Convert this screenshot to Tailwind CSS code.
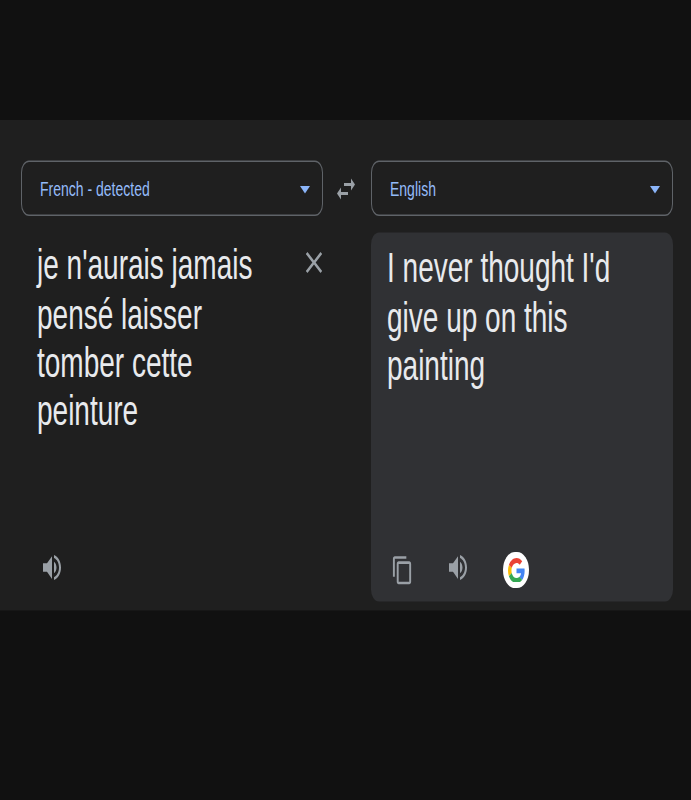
<!DOCTYPE html>
<html lang="en">

<head>
    <meta charset="UTF-8">
    <meta name="viewport" content="width=device-width, initial-scale=1.0">
    <title>Translate</title>
    <script src="https://cdn.jsdelivr.net/npm/@tailwindcss/browser@4"></script>
</head>

<body class="bg-[#111111] font-['Liberation_Sans',Arial,sans-serif]">
    <!-- the whole capture is stretched vertically, so the page is laid out at 533px and scaled -->
    <div class="h-[800px] overflow-hidden">
    <main class="h-[533.33px] pt-[80px] origin-top scale-y-150">
        <section class="h-[327.4px] bg-[#1f1f1f] pl-[21px] pt-[26.67px]">
            <div class="flex items-center">
                <button class="w-[302px] shrink-0 h-[37.33px] flex items-center justify-between pl-[18px] pr-[12px] border border-[#5f6368] rounded-lg text-sm text-[#94bbf9]">
                    <span class="pt-[0.4px] -translate-y-[0.6px]">French - detected</span>
                    <span class="w-0 h-0 mt-[3px] border-x-[5px] border-x-transparent border-t-[5px] border-t-[#8ab4f8]"></span>
                </button>
                <button class="w-[48px] shrink-0 flex justify-center pr-[2px] pt-[1px] text-[#9aa0a6]">
                    <svg class="w-[24px] h-[24px]" viewBox="0 0 24 24" fill="currentColor"><path d="M6.99 11L3 15l3.99 4v-3H14v-2H6.99v-3zM21 9l-3.99-4v3H10v2h7.01v3L21 9z"/></svg>
                </button>
                <button class="w-[302px] shrink-0 h-[37.33px] flex items-center justify-between pl-[18px] pr-[12px] border border-[#5f6368] rounded-lg text-sm text-[#94bbf9]">
                    <span class="pt-[0.4px] -translate-y-[0.6px]">English</span>
                    <span class="w-0 h-0 mt-[3px] border-x-[5px] border-x-transparent border-t-[5px] border-t-[#8ab4f8]"></span>
                </button>
            </div>
            <div class="flex gap-[48px] mt-[10.6px]">
                <div class="relative w-[302px] shrink-0 h-[246px] pl-[16px] pr-[50px] pt-[6.9px] text-[28px] leading-[32.33px] text-[#e8eaed]">
                    <p>je n'aurais jamais pensé laisser tomber cette peinture</p>
                    <button class="absolute right-[-5px] top-[8.1px] text-[#9aa0a6]">
                        <svg class="w-[28px] h-[24px]" viewBox="0 0 24 24" fill="currentColor" preserveAspectRatio="none"><path d="M19 6.41L17.59 5 12 10.59 6.41 5 5 6.41 10.59 12 5 17.59 6.41 19 12 13.41 17.59 19 19 17.59 13.41 12z"/></svg>
                    </button>
                    <button class="absolute left-[19px] bottom-[11.2px] text-[#9aa0a6]">
                        <svg class="w-[24px] h-[22.8px]" viewBox="0 0 24 24" fill="currentColor" preserveAspectRatio="none"><path d="M3 9v6h4l5 5V4L7 9H3zm13.5 3c0-1.77-1.02-3.29-2.5-4.03v8.05c1.48-.73 2.5-2.25 2.5-4.02zM14 3.23v2.06c2.89.86 5 3.54 5 6.71s-2.11 5.85-5 6.71v2.06c4.01-.91 7-4.49 7-8.77s-2.99-7.86-7-8.77z"/></svg>
                    </button>
                </div>
                <div class="w-[302px] shrink-0 h-[246px] flex flex-col justify-between bg-[#303134] rounded-lg px-[16px] pt-[8.9px] pb-[7.1px] text-[28px] leading-[32.33px] text-[#e8eaed]">
                    <p>I never thought I'd give up on this painting</p>
                    <div class="flex items-center text-[#9aa0a6]">
                        <svg class="w-[23px] h-[20.4px] ml-[4px]" viewBox="0 0 24 24" fill="currentColor" preserveAspectRatio="none"><path d="M16 1H4c-1.1 0-2 .9-2 2v14h2V3h12V1zm3 4H8c-1.1 0-2 .9-2 2v14c0 1.1.9 2 2 2h11c1.1 0 2-.9 2-2V7c0-1.1-.9-2-2-2zm0 16H8V7h11v14z"/></svg>
                        <svg class="w-[24px] h-[22.8px] ml-[32px] mb-[4px]" viewBox="0 0 24 24" fill="currentColor" preserveAspectRatio="none"><path d="M3 9v6h4l5 5V4L7 9H3zm13.5 3c0-1.77-1.02-3.29-2.5-4.03v8.05c1.48-.73 2.5-2.25 2.5-4.02zM14 3.23v2.06c2.89.86 5 3.54 5 6.71s-2.11 5.85-5 6.71v2.06c4.01-.91 7-4.49 7-8.77s-2.99-7.86-7-8.77z"/></svg>
                        <span class="ml-[33px] w-[26px] h-[23.5px] flex items-center justify-center bg-white rounded-full">
                            <svg class="w-[17px] h-[16.7px]" viewBox="0 0 48 48" preserveAspectRatio="none">
                                <path fill="#EA4335" d="M24 9.5c3.54 0 6.71 1.22 9.21 3.6l6.85-6.85C35.9 2.38 30.47 0 24 0 14.62 0 6.51 5.38 2.56 13.22l7.98 6.19C12.43 13.72 17.74 9.5 24 9.5z"/>
                                <path fill="#4285F4" d="M46.98 24.55c0-1.57-.15-3.09-.38-4.55H24v9.02h12.94c-.58 2.96-2.26 5.48-4.78 7.18l7.73 6c4.51-4.18 7.09-10.36 7.09-17.65z"/>
                                <path fill="#FBBC05" d="M10.53 28.59c-.48-1.45-.76-2.99-.76-4.59s.27-3.14.76-4.59l-7.98-6.19C.92 16.46 0 20.12 0 24c0 3.88.92 7.54 2.56 10.78l7.97-6.19z"/>
                                <path fill="#34A853" d="M24 48c6.48 0 11.93-2.13 15.89-5.81l-7.73-6c-2.15 1.45-4.92 2.3-8.16 2.3-6.26 0-11.57-4.22-13.47-9.91l-7.98 6.19C6.51 42.62 14.62 48 24 48z"/>
                            </svg>
                        </span>
                    </div>
                </div>
            </div>
        </section>
    </main>
    </div>
</body>

</html>
